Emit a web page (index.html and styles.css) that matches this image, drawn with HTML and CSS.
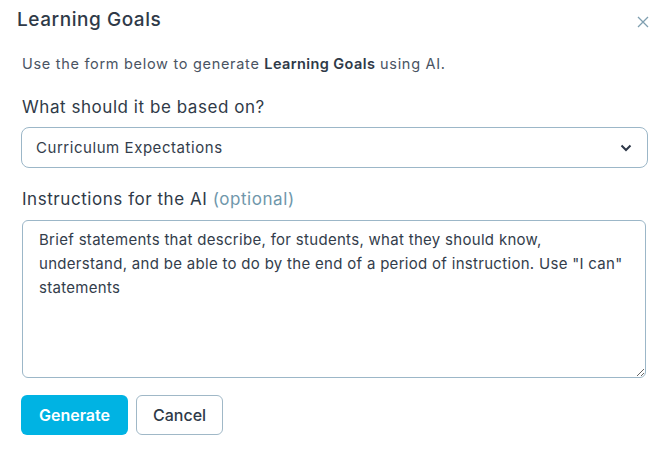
FILE: index.html
```html
<!DOCTYPE html>
<html>
<head>
<meta charset="utf-8">
<link rel="stylesheet" href="styles.css">
</head>
<body>
<div class="modal">
  <div class="header">
    <h2 class="title">Learning Goals</h2>
    <button class="close" aria-label="Close">
      <svg width="12" height="12" viewBox="0 0 12 12"><path d="M1 1L11 11M11 1L1 11" stroke="#7f9fb0" stroke-width="1.3" fill="none"/></svg>
    </button>
  </div>
  <p class="desc">Use the form below to generate <strong>Learning Goals</strong> using AI.</p>
  <label class="label">What should it be based on?</label>
  <div class="select">
    <span>Curriculum Expectations</span>
    <svg width="12" height="8" viewBox="0 0 12 8"><path d="M1.5 1.5L6 6L10.5 1.5" stroke="#2d3748" stroke-width="2" fill="none"/></svg>
  </div>
  <label class="label">Instructions for the AI <span class="opt">(optional)</span></label>
  <textarea class="ta">Brief statements that describe, for students, what they should know,
understand, and be able to do by the end of a period of instruction. Use "I can"
statements</textarea>
  <div class="actions">
    <button class="btn primary">Generate</button>
    <button class="btn secondary">Cancel</button>
  </div>
</div>
</body>
</html>
```
FILE: styles.css
```css
* { box-sizing: border-box; }
html, body { margin: 0; background: #fff; }
body { font-family: "Inter", "Open Sans", sans-serif; color: #2d3748; }
.modal { padding: 8px 21px 0 21px; }
.header { display: flex; justify-content: space-between; align-items: center; margin-left: -4px; height: 22px; }
.title { margin: 0; font-size: 19px; line-height: 23px; font-weight: 500; color: #2f3a48; letter-spacing: 0.55px; }
.close { border: 0; background: none; padding: 0; margin-top: 6px; margin-right: -2px; display: flex; }
.desc { margin: 25px 0 0 1px; font-size: 14.5px; line-height: 18px; color: #4a5463; letter-spacing: 0.7px; }
.desc strong { font-weight: 600; color: #2f3a48; letter-spacing: 0.4px; }
.label { display: block; margin: 24px 0 0 1px; font-size: 17px; line-height: 21px; color: #2f3a48; letter-spacing: 0.55px; }
.opt { color: #6f97ab; }
.select { margin-top: 9px; height: 41px; border: 1px solid #9cb7c8; border-radius: 8px; display: flex; align-items: center; justify-content: space-between; padding: 0 15px 0 14px; font-size: 15px; color: #333d4b; width: 627px; letter-spacing: 0.55px; }
.select + .label { margin-top: 21px; }
.ta { display: block; margin-top: 10px; margin-left: 1px; width: 624px; height: 158px; border: 1px solid #9cb7c8; border-radius: 6px; padding: 7px 2px 7px 16px; font-family: inherit; font-size: 15px; line-height: 24px; color: #333d4b; resize: vertical; letter-spacing: 0.3px; white-space: pre-wrap; }
.actions { display: flex; gap: 8px; margin-top: 17px; }
.btn { height: 40px; border-radius: 6px; font-family: "Inter", sans-serif; font-size: 16px; padding: 0 16px; }
.primary { background: #00b3e3; color: #fff; border: 0; font-weight: 600; width: 107px; }
.secondary { background: #fff; border: 1px solid #a0b8c7; color: #2f3a48; font-weight: 500; width: 87px; }
```
